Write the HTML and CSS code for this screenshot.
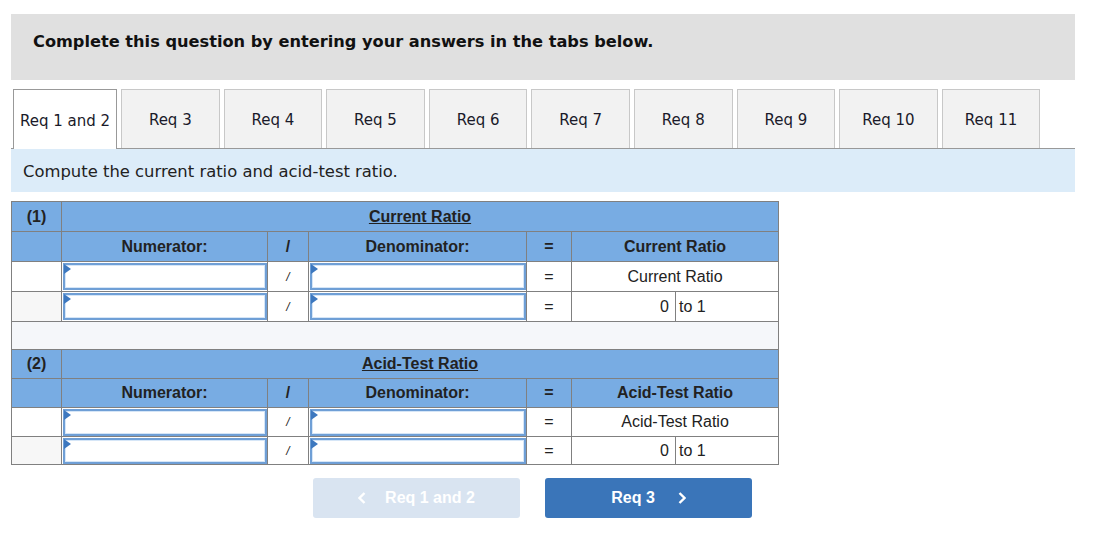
FILE: index.html
```html
<!DOCTYPE html>
<html lang="en">
<head>
    <meta charset="UTF-8">
    <title>Req 1 and 2</title>
    <link rel="stylesheet" href="styles.css">
</head>
<body>
    <div class="page">
        <!-- Instrucciones -->
        <div class="banner">Complete this question by entering your answers in the tabs below.</div>

        <!-- Pestañas -->
        <div class="tabs">
            <div class="tab active">Req 1 and 2</div>
            <div class="tab">Req 3</div>
            <div class="tab">Req 4</div>
            <div class="tab">Req 5</div>
            <div class="tab">Req 6</div>
            <div class="tab">Req 7</div>
            <div class="tab">Req 8</div>
            <div class="tab">Req 9</div>
            <div class="tab">Req 10</div>
            <div class="tab">Req 11</div>
        </div>

        <div class="prompt">Compute the current ratio and acid-test ratio.</div>

        <!-- Tabla de ratios -->
        <table class="ratios">
            <colgroup>
                <col class="c-num">
                <col class="c-input">
                <col class="c-op">
                <col class="c-input2">
                <col class="c-eq">
                <col class="c-val">
                <col class="c-to">
            </colgroup>
            <tr class="head">
                <td>(1)</td>
                <td colspan="6"><u>Current Ratio</u></td>
            </tr>
            <tr class="head">
                <td></td>
                <td>Numerator:</td>
                <td>/</td>
                <td>Denominator:</td>
                <td>=</td>
                <td colspan="2">Current Ratio</td>
            </tr>
            <tr class="row">
                <td></td>
                <td class="cell-input"><div class="entry"></div></td>
                <td class="op">/</td>
                <td class="cell-input"><div class="entry"></div></td>
                <td>=</td>
                <td colspan="2">Current Ratio</td>
            </tr>
            <tr class="row">
                <td class="shade"></td>
                <td class="cell-input"><div class="entry"></div></td>
                <td class="op">/</td>
                <td class="cell-input"><div class="entry"></div></td>
                <td>=</td>
                <td class="val">0</td>
                <td class="to">to 1</td>
            </tr>
            <tr class="spacer">
                <td colspan="7"></td>
            </tr>
            <tr class="head short">
                <td>(2)</td>
                <td colspan="6"><u>Acid-Test Ratio</u></td>
            </tr>
            <tr class="head short">
                <td></td>
                <td>Numerator:</td>
                <td>/</td>
                <td>Denominator:</td>
                <td>=</td>
                <td colspan="2">Acid-Test Ratio</td>
            </tr>
            <tr class="row short">
                <td></td>
                <td class="cell-input"><div class="entry"></div></td>
                <td class="op">/</td>
                <td class="cell-input"><div class="entry"></div></td>
                <td>=</td>
                <td colspan="2">Acid-Test Ratio</td>
            </tr>
            <tr class="row last">
                <td class="shade"></td>
                <td class="cell-input"><div class="entry"></div></td>
                <td class="op">/</td>
                <td class="cell-input"><div class="entry"></div></td>
                <td>=</td>
                <td class="val">0</td>
                <td class="to">to 1</td>
            </tr>
        </table>

        <!-- Navegación -->
        <div class="nav">
            <div class="btn prev">
                <svg class="chev" width="8" height="12" viewBox="0 0 8 12"><polyline points="6.5,1 1.5,6 6.5,11" fill="none" stroke="#fff" stroke-width="2.4"/></svg>
                Req 1 and 2
            </div>
            <div class="btn next">
                Req 3
                <svg class="chev" width="8" height="12" viewBox="0 0 8 12"><polyline points="1.5,1 6.5,6 1.5,11" fill="none" stroke="#fff" stroke-width="2.4"/></svg>
            </div>
        </div>
    </div>
</body>
</html>
```

FILE: styles.css
```css
/* Estilos generales */
body {
    margin: 0;
    padding: 0;
    background-color: #fff;
    color: #222;
    font-family: "DejaVu Sans", Verdana, sans-serif;
}

.page {
    padding: 14px 19px 0 11px;
}

/* Instrucciones */
.banner {
    background-color: #e0e0e0;
    height: 66px;
    padding: 18px 0 0 22px;
    box-sizing: border-box;
    font-size: 16.2px;
    font-weight: bold;
    color: #111;
}

/* Pestañas */
.tabs {
    display: flex;
    gap: 4px;
    margin-top: 9px;
    padding-left: 2px;
    border-bottom: 1px solid #999;
}

.tab {
    width: 98.6px;
    height: 59px;
    box-sizing: border-box;
    display: flex;
    align-items: center;
    justify-content: center;
    padding-top: 2px;
    background-color: #f2f2f2;
    border: 1px solid #c8c8c8;
    border-bottom: none;
    font-size: 15px;
    color: #1a1a2a;
}

.tab.active {
    width: 104px;
    background-color: #fff;
    border-color: #999;
    margin-bottom: -1px;
    height: 60px;
}

.prompt {
    background-color: #dcecf9;
    height: 43px;
    padding: 13px 0 0 12px;
    box-sizing: border-box;
    font-size: 16.4px;
    color: #222;
}

/* Tabla de ratios */
.ratios {
    margin-top: 9px;
    border-collapse: collapse;
    table-layout: fixed;
    width: 767px;
    font-family: "Liberation Sans", Arial, sans-serif;
    font-size: 16px;
}

.c-num { width: 50px; }
.c-input { width: 206px; }
.c-op { width: 41px; }
.c-input2 { width: 218px; }
.c-eq { width: 45px; }
.c-val { width: 104px; }
.c-to { width: 103px; }

.ratios td {
    border: 1px solid #808080;
    text-align: center;
    padding: 0;
    color: #222;
}

.ratios tr {
    height: 30px;
}

.ratios tr.short {
    height: 29px;
}

.ratios tr.last {
    height: 28px;
}

.head td {
    background-color: #78ace3;
    font-weight: bold;
}

.row td.shade {
    background-color: #f7f7f7;
}

.row td.op {
    font-size: 12px;
    font-style: italic;
}

.row td.val {
    text-align: right;
    padding-right: 6px;
}

.row td.to {
    text-align: left;
    padding-left: 3px;
}

.row td.cell-input {
    padding: 0;
    vertical-align: top;
}

.entry {
    position: relative;
    height: 27px;
    border: 2px solid #6f9fd6;
    box-shadow: inset 0 0 0 1px #d6e6f7;
    background-color: #fff;
    box-sizing: border-box;
    margin: 1px 0 0 1px;
}

.last .entry {
    height: 26px;
}

/* Marcador triangular de la celda */
.entry::before {
    content: "";
    position: absolute;
    top: -1px;
    left: -1px;
    border-top: 5px solid transparent;
    border-bottom: 5px solid transparent;
    border-left: 7px solid #3d78bf;
}

.ratios tr.spacer {
    height: 28px;
}

.spacer td {
    background-color: #f5f7fa;
}

/* Navegación */
.nav {
    display: flex;
    gap: 25px;
    margin-top: 13px;
    padding-left: 302px;
}

.btn {
    width: 207px;
    height: 40px;
    border-radius: 3px;
    display: flex;
    align-items: center;
    justify-content: center;
    font-family: "Liberation Sans", Arial, sans-serif;
    font-size: 16px;
    font-weight: bold;
    color: #fff;
}

.prev {
    background-color: #d9e4f1;
    gap: 19px;
}

.next {
    background-color: #3a75b9;
    gap: 23px;
}
```
